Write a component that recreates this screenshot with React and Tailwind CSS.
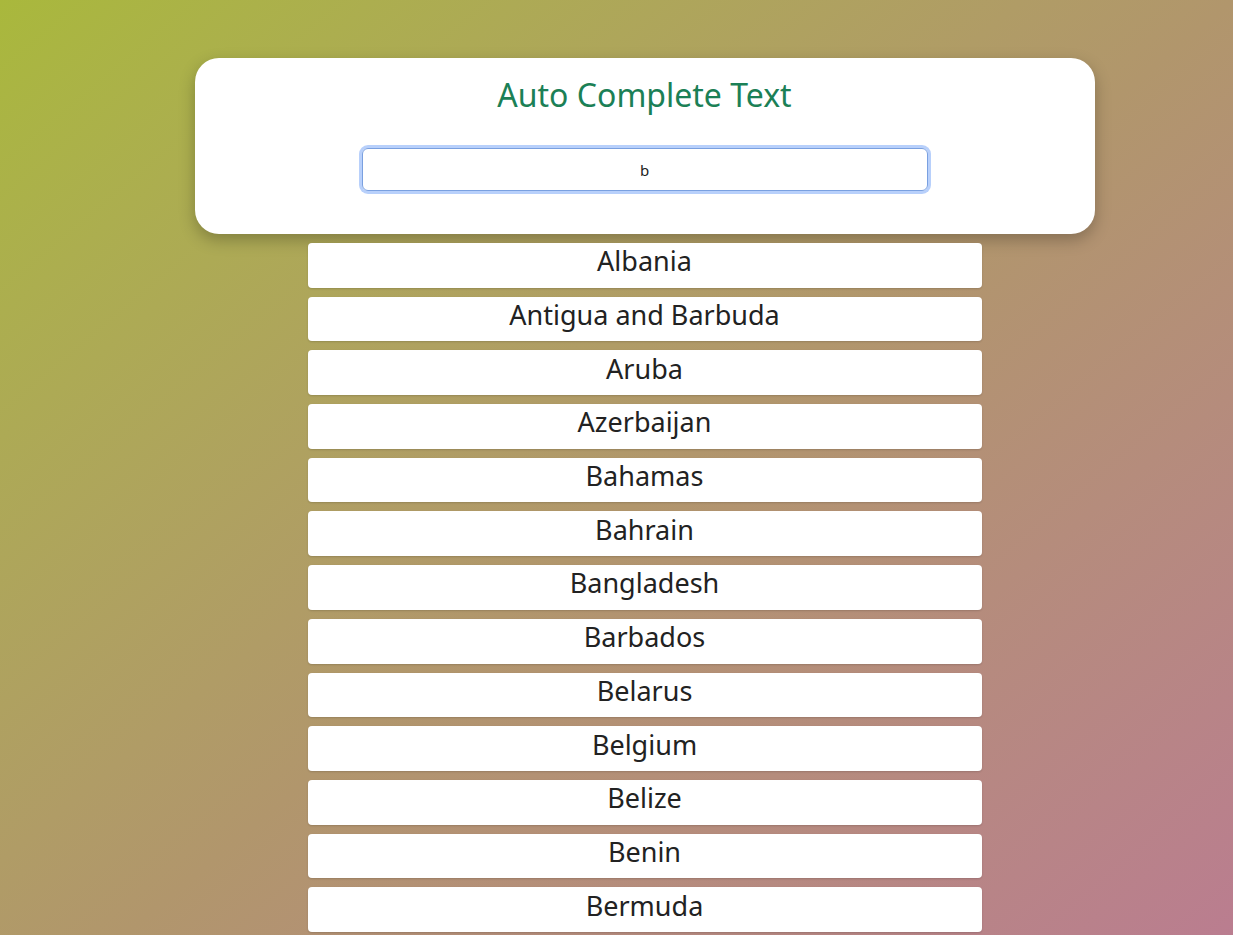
import { useState } from "react";

const COUNTRIES = [
  "Albania",
  "Antigua and Barbuda",
  "Aruba",
  "Azerbaijan",
  "Bahamas",
  "Bahrain",
  "Bangladesh",
  "Barbados",
  "Belarus",
  "Belgium",
  "Belize",
  "Benin",
  "Bermuda",
  "Bhutan",
  "Bolivia",
];

const App = () => {
  const [query, setQuery] = useState("b");

  const matches = COUNTRIES.filter((c) =>
    c.toLowerCase().includes(query.toLowerCase())
  );

  return (
    <div
      className="min-h-screen bg-gradient-to-br from-[#a9b83c] via-[#b1966c] to-[#bb7a93] pl-[56px] pt-[58px] flex flex-col items-center"
      style={{ fontFamily: '"Noto Sans", "Open Sans", sans-serif' }}
    >
      <div className="w-[900px] h-[176px] bg-white rounded-[24px] shadow-[0_6px_16px_rgba(0,0,0,0.25)] flex flex-col items-center pt-[15px]">
        <h1 className="text-[32px] leading-[44px] text-[#1b8056]">Auto Complete Text</h1>
        <input
          value={query}
          onChange={(e) => setQuery(e.target.value)}
          className="mt-[31px] w-[566px] h-[43px] rounded-[6px] border border-[#7aa0e0] ring-[3px] ring-[#b8d0fb] outline-none text-center text-[15px] text-[#222]"
        />
      </div>

      <ul className="mt-[9px] flex flex-col gap-[9px]">
        {matches.map((c) => (
          <li
            key={c}
            className="w-[674px] h-[44.7px] bg-white rounded-[4px] shadow-[0_1px_2px_rgba(0,0,0,0.15)] flex items-center justify-center text-[27px] leading-none text-[#222] pb-[9px]"
          >
            {c}
          </li>
        ))}
      </ul>
    </div>
  );
};

export default App;
